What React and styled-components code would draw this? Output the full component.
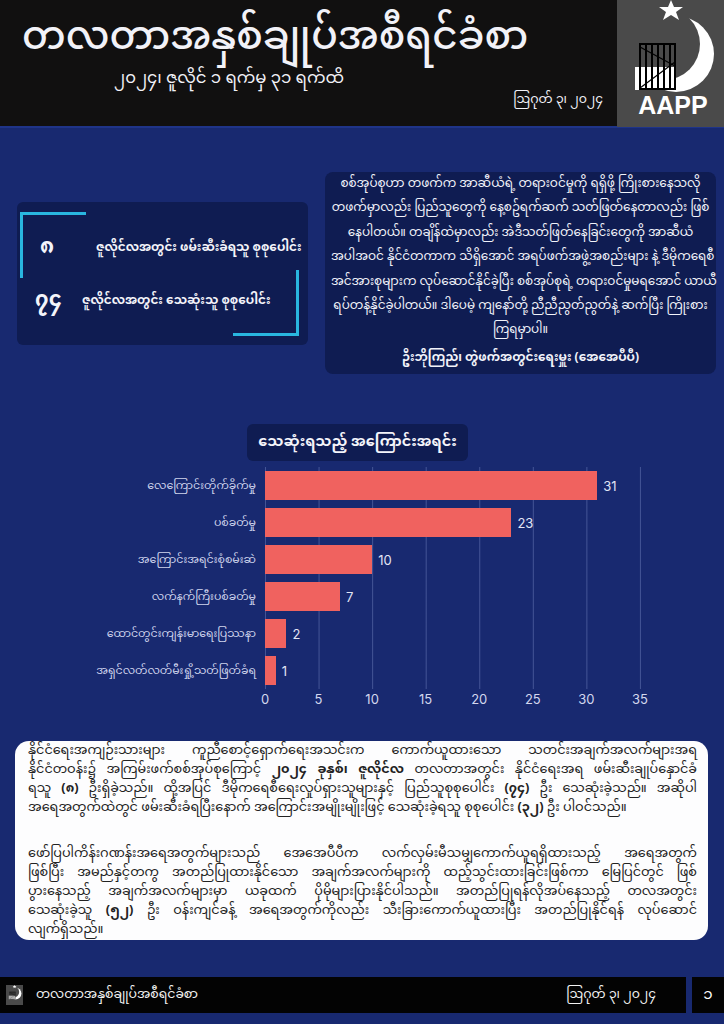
import React from 'react'
import styled, { createGlobalStyle } from 'styled-components'

const MM = `"Noto Sans Myanmar", "Noto Sans Myanmar UI", Padauk, "Myanmar Text", "Noto Sans", sans-serif`
const Global = createGlobalStyle`
  * { box-sizing: border-box; }
  body {
    margin: 0;
    background: #182970;
    font-family: ${MM};
  }
`

const causes = [
  { label: 'လေကြောင်းတိုက်ခိုက်မှု', value: 31 },
  { label: 'ပစ်ခတ်မှု', value: 23 },
  { label: 'အကြောင်းအရင်းစုံစမ်းဆဲ', value: 10 },
  { label: 'လက်နက်ကြီးပစ်ခတ်မှု', value: 7 },
  { label: 'ထောင်တွင်းကျန်းမာရေးပြဿနာ', value: 2 },
  { label: 'အရှင်လတ်လတ်မီးရှို့သတ်ဖြတ်ခံရ', value: 1 }
]
const ticks = [0, 5, 10, 15, 20, 25, 30, 35]
const unit = 375 / 35

const quote = [
  'စစ်အုပ်စုဟာ တဖက်က အာဆီယံရဲ့ တရားဝင်မှုကို ရရှိဖို့ ကြိုးစားနေသလို',
  'တဖက်မှာလည်း ပြည်သူတွေကို နေ့စဥ်ရက်ဆက် သတ်ဖြတ်နေတာလည်း ဖြစ်',
  'နေပါတယ်။ တချိန်ထဲမှာလည်း အဲဒီသတ်ဖြတ်နေခြင်းတွေကို အာဆီယံ',
  'အပါအဝင် နိုင်ငံတကာက သိရှိအောင် အရပ်ဖက်အဖွဲ့အစည်းများ နဲ့ ဒီမိုကရေစီ',
  'အင်အားစုများက လုပ်ဆောင်နိုင်ခဲ့ပြီး စစ်အုပ်စုရဲ့ တရားဝင်မှုမရအောင် ယာယီ',
  'ရပ်တန့်နိုင်ခဲ့ပါတယ်။ ဒါပေမဲ့ ကျနော်တို့ ညီညီညွတ်ညွတ်နဲ့ ဆက်ပြီး ကြိုးစား',
  'ကြရမှာပါ။'
]

const Page = styled.div`
  width: 724px;
  height: 1024px;
  background: #182970;
  display: flex;
  flex-direction: column;
`
const Header = styled.header`
  display: flex;
  height: 128px;
  border-bottom: 2px solid #1f3488;
`
const HeaderText = styled.div`
  flex: 1;
  background: #111010;
  color: #f2f2f8;
  padding: 14px 14px 0 22px;
  display: flex;
  flex-direction: column;
`
const Title = styled.h1`
  margin: 0;
  font-size: 39px;
  line-height: 52px;
  font-weight: 500;
`
const Subtitle = styled.div`
  font-size: 16.5px;
  line-height: 26px;
  padding-left: 92px;
`
const HeaderDate = styled.div`
  align-self: flex-end;
  font-size: 12.5px;
  line-height: 20px;
  margin-top: -2px;
`
const Logo = styled.div`
  width: 107px;
  background: #4a4a4a;
`
const Main = styled.main`
  flex: 1;
  display: flex;
  flex-direction: column;
  padding: 44px 8px 0 17px;
`
const TopRow = styled.section`
  display: flex;
  align-items: center;
  gap: 17px;
`
const StatsCard = styled.div`
  position: relative;
  flex-shrink: 0;
  width: 291px;
  height: 143px;
  background: #0f1c52;
  border-radius: 6px;
  display: flex;
  flex-direction: column;
  justify-content: center;
  gap: 27px;
  padding: 2px 0 0 18px;
`
const Corner = styled.span`
  position: absolute;
  width: 66px;
  height: 66px;
  border-color: #29b6e0;
  border-style: solid;
  border-width: 0;
  ${p => p.$top ? 'top: 10px; left: 3px; border-top-width: 3px; border-left-width: 3px;' : 'bottom: 9px; right: 9px; border-bottom-width: 3px; border-right-width: 3px;'}
`
const StatRow = styled.div`
  display: flex;
  align-items: center;
  color: #f4f4fa;
`
const StatNum = styled.div`
  width: ${p => (p.$wide ? 47 : 61)}px;
  font-size: 21px;
  line-height: 24px;
  font-weight: 700;
  padding-left: ${p => (p.$wide ? 0 : 5)}px;
`
const StatText = styled.div`
  font-size: 12px;
  font-weight: 700;
  white-space: nowrap;
`
const QuoteCard = styled.div`
  flex: 1;
  min-width: 0;
  background: #0f1c52;
  border-radius: 8px;
  color: #f2f3fa;
  text-align: center;
  padding: 0 6px 4px;
  font-size: 12px;
  line-height: 24.4px;
`
const QuoteLine = styled.div`
  white-space: nowrap;
`
const QuoteAuthor = styled.div`
  font-weight: 700;
  margin-top: 3px;
`
const ChartSection = styled.section`
  display: flex;
  flex-direction: column;
  margin-top: 50px;
`
const ChartTitle = styled.h2`
  align-self: center;
  margin: 0 0 10px -18px;
  background: #0f1c52;
  border-radius: 6px;
  color: #f4f4fa;
  font-size: 14.5px;
  font-weight: 700;
  line-height: 37px;
  padding: 0 11px;
`
const Plot = styled.div`
  display: flex;
  flex-direction: column;
  gap: 8px;
  padding-bottom: 4px;
`
const BarRow = styled.div`
  display: flex;
  align-items: center;
  height: 29px;
`
const BarLabel = styled.div`
  width: 248px;
  text-align: right;
  padding-right: 9px;
  color: #cfd4ec;
  font-size: 11px;
`
const Track = styled.div`
  width: 400px;
  height: 37px;
  margin: -4px 0;
  display: flex;
  align-items: center;
  gap: 6px;
  background-image: linear-gradient(to right, rgba(160, 175, 230, 0.32) 1px, transparent 1px);
  background-size: ${unit * 5}px 100%;
  background-repeat: repeat-x;
  background-position: ${unit * 5}px 0;
`
const Bar = styled.div`
  height: 29px;
  background: #f0625f;
`
const BarValue = styled.span`
  color: #e2e5f5;
  font-family: Inter, "Liberation Sans", sans-serif;
  font-size: 13px;
`
const Axis = styled.div`
  display: flex;
  padding-left: ${248 - unit * 2.5}px;
`
const Tick = styled.span`
  width: ${unit * 5}px;
  text-align: center;
  color: #d3d7ee;
  font-family: Inter, "Liberation Sans", sans-serif;
  font-size: 13px;
  line-height: 20px;
`
const TextCard = styled.article`
  margin: 32px 8px 0 -2px;
  background: #fdfdfe;
  border-radius: 14px;
  padding: 1px 11px 0 13px;
  color: #222;
  font-size: 12.8px;
  line-height: 19px;
`
const Para = styled.div`
  & + & { margin-top: 27px; }
`
const Line = styled.div`
  white-space: nowrap;
  text-align: justify;
  text-align-last: ${p => (p.$last ? 'left' : 'justify')};
`
const Footer = styled.footer`
  display: flex;
  gap: 6px;
  height: 36px;
  margin-bottom: 11px;
`
const FooterBar = styled.div`
  flex: 1;
  background: #030303;
  display: flex;
  align-items: center;
  padding: 0 30px 0 6px;
  color: #f2f2f2;
  font-size: 12.5px;
`
const FooterTitle = styled.span`
  flex: 1;
  margin-left: 13px;
`
const PageNum = styled.div`
  width: 32px;
  background: #030303;
  color: #fff;
  display: flex;
  align-items: center;
  justify-content: center;
  font-size: 15px;
`

const barXs = [27, 33, 39, 45, 51, 57, 62]

const AappMark = ({ width = 107, text = true, id = 'm' }) => (
  <svg width={width} height={width * 127 / 107} viewBox="5 0 107 127">
    <defs>
      <mask id={`moon-${id}`}>
        <rect width="112" height="127" fill="#000" />
        <circle cx="64" cy="54" r="38" fill="#fff" />
        <circle cx="52" cy="44" r="36" fill="#000" />
      </mask>
    </defs>
    <rect width="112" height="127" fill="#4a4a4a" />
    <path d="M59 0 L62 7 L71 7 L64 12 L67 20 L59 15 L51 20 L54 12 L47 7 L56 7 Z" fill="#fff" />
    <rect width="112" height="127" fill="#fff" mask={`url(#moon-${id})`} />
    <rect x="23" y="67" width="41" height="23" fill="#fff" />
    {barXs.map(x => (
      <rect key={x} x={x} y="43" width="2" height="47" fill="#000" />
    ))}
    <rect x="27" y="43" width="37" height="2" fill="#000" />
    <rect x="27" y="88" width="37" height="2" fill="#000" />
    <line x1="28" y1="47" x2="63" y2="66" stroke="#000" strokeWidth="1.2" />
    <line x1="28" y1="88" x2="63" y2="62" stroke="#000" strokeWidth="1.2" />
    {text && (
      <text x="61" y="114" textAnchor="middle" fill="#fff" fontFamily="'Liberation Sans', Arial, sans-serif" fontWeight="700" fontSize="25">AAPP</text>
    )}
  </svg>
)

const Lines = ({ lines }) => lines.map((l, i) => (
  <Line key={i} $last={i === lines.length - 1}>{l}</Line>
))

export default function App() {
  return (
    <Page>
      <Global />
      <Header>
        <HeaderText>
          <Title>တလတာအနှစ်ချုပ်အစီရင်ခံစာ</Title>
          <Subtitle>၂၀၂၄၊ ဇူလိုင် ၁ ရက်မှ ၃၁ ရက်ထိ</Subtitle>
          <HeaderDate>ဩဂုတ် ၃၊ ၂၀၂၄</HeaderDate>
        </HeaderText>
        <Logo>
          <AappMark />
        </Logo>
      </Header>
      <Main>
        <TopRow>
          <StatsCard>
            <Corner $top />
            <Corner />
            <StatRow>
              <StatNum>၈</StatNum>
              <StatText>ဇူလိုင်လအတွင်း ဖမ်းဆီးခံရသူ စုစုပေါင်း</StatText>
            </StatRow>
            <StatRow>
              <StatNum $wide>၇၄</StatNum>
              <StatText>ဇူလိုင်လအတွင်း သေဆုံးသူ စုစုပေါင်း</StatText>
            </StatRow>
          </StatsCard>
          <QuoteCard>
            {quote.map((l, i) => <QuoteLine key={i}>{l}</QuoteLine>)}
            <QuoteAuthor>ဦးဘိုကြည်၊ တွဲဖက်အတွင်းရေးမှူး (အေအေပီပီ)</QuoteAuthor>
          </QuoteCard>
        </TopRow>
        <ChartSection>
          <ChartTitle>သေဆုံးရသည့် အကြောင်းအရင်း</ChartTitle>
          <Plot>
            {causes.map(c => (
              <BarRow key={c.label}>
                <BarLabel>{c.label}</BarLabel>
                <Track>
                  <Bar style={{ width: c.value * unit }} />
                  <BarValue>{c.value}</BarValue>
                </Track>
              </BarRow>
            ))}
          </Plot>
          <Axis>
            {ticks.map(t => <Tick key={t}>{t}</Tick>)}
          </Axis>
        </ChartSection>
        <TextCard>
          <Para>
            <Lines lines={[
              'နိုင်ငံရေးအကျဉ်းသားများ ကူညီစောင့်ရှောက်ရေးအသင်းက ကောက်ယူထားသော သတင်းအချက်အလက်များအရ',
              <>နိုင်ငံတဝန်း၌ အကြမ်းဖက်စစ်အုပ်စုကြောင့် <b>၂၀၂၄ ခုနှစ်၊ ဇူလိုင်လ</b> တလတာအတွင်း နိုင်ငံရေးအရ ဖမ်းဆီးချုပ်နှောင်ခံ</>,
              <>ရသူ <b>(၈)</b> ဦးရှိခဲ့သည်။ ထို့အပြင် ဒီမိုကရေစီရေးလှုပ်ရှားသူများနှင့် ပြည်သူစုစုပေါင်း <b>(၇၄)</b> ဦး သေဆုံးခဲ့သည်။ အဆိုပါ</>,
              <>အရေအတွက်ထဲတွင် ဖမ်းဆီးခံရပြီးနောက် အကြောင်းအမျိုးမျိုးဖြင့် သေဆုံးခဲ့ရသူ စုစုပေါင်း <b>(၃၂)</b> ဦး ပါဝင်သည်။</>
            ]} />
          </Para>
          <Para>
            <Lines lines={[
              'ဖော်ပြပါကိန်းဂဏန်းအရေအတွက်များသည် အေအေပီပီက လက်လှမ်းမီသမျှကောက်ယူရရှိထားသည့် အရေအတွက်',
              'ဖြစ်ပြီး အမည်နှင့်တကွ အတည်ပြုထားနိုင်သော အချက်အလက်များကို ထည့်သွင်းထားခြင်းဖြစ်ကာ မြေပြင်တွင် ဖြစ်',
              'ပွားနေသည့် အချက်အလက်များမှာ ယခုထက် ပိုမိုများပြားနိုင်ပါသည်။ အတည်ပြုရန်လိုအပ်နေသည့် တလအတွင်း',
              <>သေဆုံးခဲ့သူ <b>(၅၂)</b> ဦး ဝန်းကျင်ခန့် အရေအတွက်ကိုလည်း သီးခြားကောက်ယူထားပြီး အတည်ပြုနိုင်ရန် လုပ်ဆောင်</>,
              'လျက်ရှိသည်။'
            ]} />
          </Para>
        </TextCard>
      </Main>
      <Footer>
        <FooterBar>
          <AappMark width={17} text={false} id="f" />
          <FooterTitle>တလတာအနှစ်ချုပ်အစီရင်ခံစာ</FooterTitle>
          <span>ဩဂုတ် ၃၊ ၂၀၂၄</span>
        </FooterBar>
        <PageNum>၁</PageNum>
      </Footer>
    </Page>
  )
}
